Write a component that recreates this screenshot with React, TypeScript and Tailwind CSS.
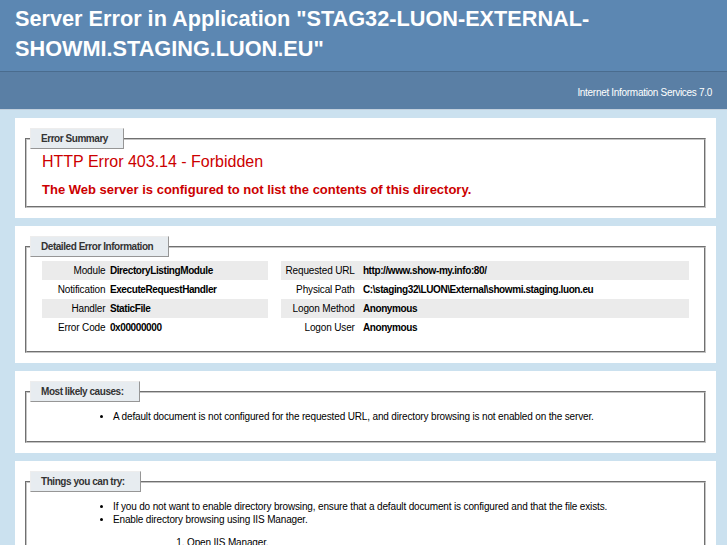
import React from "react";

const leftRows = [
  ["Module", "DirectoryListingModule"],
  ["Notification", "ExecuteRequestHandler"],
  ["Handler", "StaticFile"],
  ["Error Code", "0x00000000"],
];

const rightRows = [
  ["Requested URL", "http://www.show-my.info:80/"],
  ["Physical Path", "C:\\staging32\\LUON\\External\\showmi.staging.luon.eu"],
  ["Logon Method", "Anonymous"],
  ["Logon User", "Anonymous"],
];

const Legend = ({ children }: { children: React.ReactNode }) => (
  <legend className="-ml-[12px] pl-[10px] pr-[15px] py-[4px] text-[10px] leading-[11px] tracking-[-0.45px] font-bold text-[#333333] bg-[#E7ECF0] border-t border-l border-t-[#EDEDED] border-l-[#EDEDED] border-r border-b border-r-[#969696] border-b-[#969696]">
    {children}
  </legend>
);

const Panel = ({ children }: { children: React.ReactNode }) => (
  <div className="mt-[8px] ml-[15px] mr-[11px] bg-white p-[10px]">{children}</div>
);

const fieldsetCls =
  "border-2 [border-style:groove] border-[#c4c4c4] px-[15px] min-w-0";

const App = () => {
  return (
    <div className="min-h-screen bg-[#CBE1EF] text-[10px] tracking-[-0.15px] text-black font-['Liberation_Sans',Arial,sans-serif]">
      {/* Header */}
      <div className="h-[71px] bg-[#5C87B2] px-[15px] pt-[4px] text-white">
        <h1 className="text-[21.7px] leading-[30px] tracking-normal font-bold">
          Server Error in Application "STAG32-LUON-EXTERNAL-
          <br />
          SHOWMI.STAGING.LUON.EU"
        </h1>
      </div>
      <div className="h-[39px] flex items-center justify-end bg-[#5A7FA5] border-t border-t-[#4A6C8E] border-b border-b-[#C1CFDD] px-[15px] pt-[4px] text-white text-[10px] tracking-[-0.3px]">
        <p>Internet Information Services 7.0</p>
      </div>

      {/* Error summary */}
      <Panel>
        <fieldset className={`${fieldsetCls} pb-[9px]`}>
          <Legend>Error Summary</Legend>
          <h2 className="mt-[3px] text-[16px] leading-[19px] tracking-normal font-normal text-[#CC0000]">
            HTTP Error 403.14 - Forbidden
          </h2>
          <h3 className="mt-[11px] text-[13px] leading-[15px] tracking-normal font-bold text-[#CC0000]">
            The Web server is configured to not list the contents of this directory.
          </h3>
        </fieldset>
      </Panel>

      {/* Details */}
      <Panel>
        <fieldset className={`${fieldsetCls} pb-[10px]`}>
          <Legend>Detailed Error Information</Legend>
          <div className="flex my-[4px]">
            <div className="w-[35%] mr-[2%]">
              <table className="w-full">
                <tbody>
                  {leftRows.map(([k, v], i) => (
                    <tr key={k} className={i % 2 === 0 ? "bg-[#ebebeb]" : ""}>
                      <th className="w-[30%] text-right pr-[2%] py-[3px] font-normal leading-[13px] align-top">
                        {k}
                      </th>
                      <td className="py-[3px] font-bold tracking-[-0.4px] leading-[13px] align-top">{v}</td>
                    </tr>
                  ))}
                </tbody>
              </table>
            </div>
            <div className="w-[63%]">
              <table className="w-full">
                <tbody>
                  {rightRows.map(([k, v], i) => (
                    <tr key={k} className={i % 2 === 0 ? "bg-[#ebebeb]" : ""}>
                      <th className="w-[20%] text-right pr-[2%] py-[3px] font-normal leading-[13px] align-top whitespace-nowrap">
                        {k}
                      </th>
                      <td className="py-[3px] font-bold tracking-[-0.4px] leading-[13px] align-top">{v}</td>
                    </tr>
                  ))}
                </tbody>
              </table>
            </div>
          </div>
        </fieldset>
      </Panel>

      {/* Causes */}
      <Panel>
        <fieldset className={`${fieldsetCls} pb-[10px]`}>
          <Legend>Most likely causes:</Legend>
          <ul className="list-disc pl-[71px] mt-[8px] mb-[8px] leading-[13px]">
            <li>
              A default document is not configured for the requested URL, and directory browsing is not
              enabled on the server.
            </li>
          </ul>
        </fieldset>
      </Panel>

      {/* Things to try */}
      <Panel>
        <fieldset className={`${fieldsetCls} pb-[10px]`}>
          <Legend>Things you can try:</Legend>
          <ul className="list-disc pl-[71px] mt-[8px] mb-[8px] leading-[13px]">
            <li>
              If you do not want to enable directory browsing, ensure that a default document is
              configured and that the file exists.
            </li>
            <li>
              Enable directory browsing using IIS Manager.
              <ol className="list-decimal pl-[74px] my-[10px]">
                <li>Open IIS Manager.</li>
                <li>In the Features view, select Directory Browsing.</li>
                <li>Click Enable in the Actions pane.</li>
              </ol>
            </li>
            <li>
              Verify that the configuration/system.webServer/directoryBrowse@enabled attribute is set to
              true in the site or application configuration file.
            </li>
          </ul>
        </fieldset>
      </Panel>
      <div className="h-[10px]" />
    </div>
  );
};

export default App;
